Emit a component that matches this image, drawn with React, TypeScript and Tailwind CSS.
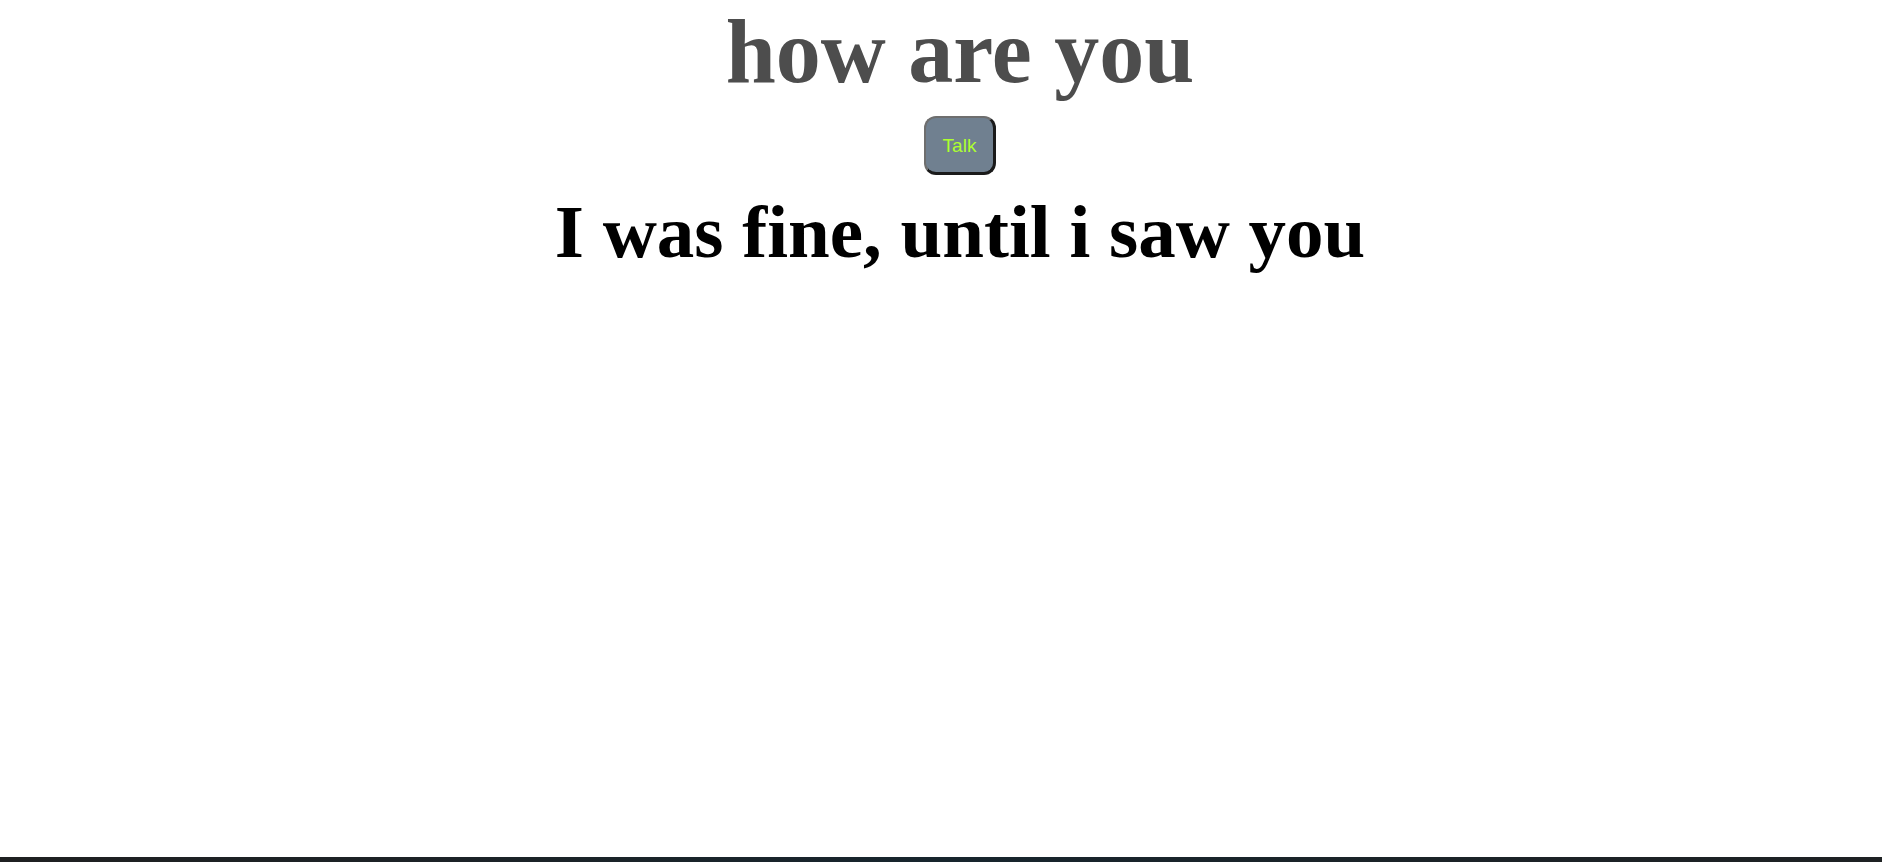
const App = () => {
  return (
    <div className="min-h-screen bg-white flex flex-col">
      <div className="flex flex-col items-center pl-[38px] font-['Liberation_Serif','Times_New_Roman',serif]">
        <h1 className="text-[90px] font-bold leading-[normal] text-[#4d4d4d]">how are you</h1>

        <button className="mt-[13px] w-[72px] h-[59px] pt-[2px] rounded-[12px] bg-[#708090] text-[#adff2f] text-[19px] font-['Liberation_Sans',Arial,sans-serif] border-2 border-b-[3px] border-r-[3px] border-t-[#6e6e6e] border-l-[#6e6e6e] border-b-[#1a1a1a] border-r-[#1a1a1a]">
          Talk
        </button>

        <h1 className="mt-[14px] text-[75px] font-bold leading-[normal] text-black">
          I was fine, until i saw you
        </h1>
      </div>

      <div className="mt-auto h-[5px] bg-linear-to-r from-[#1f2021] via-[#17252d] to-[#1e2123]" />
    </div>
  );
};

export default App;
